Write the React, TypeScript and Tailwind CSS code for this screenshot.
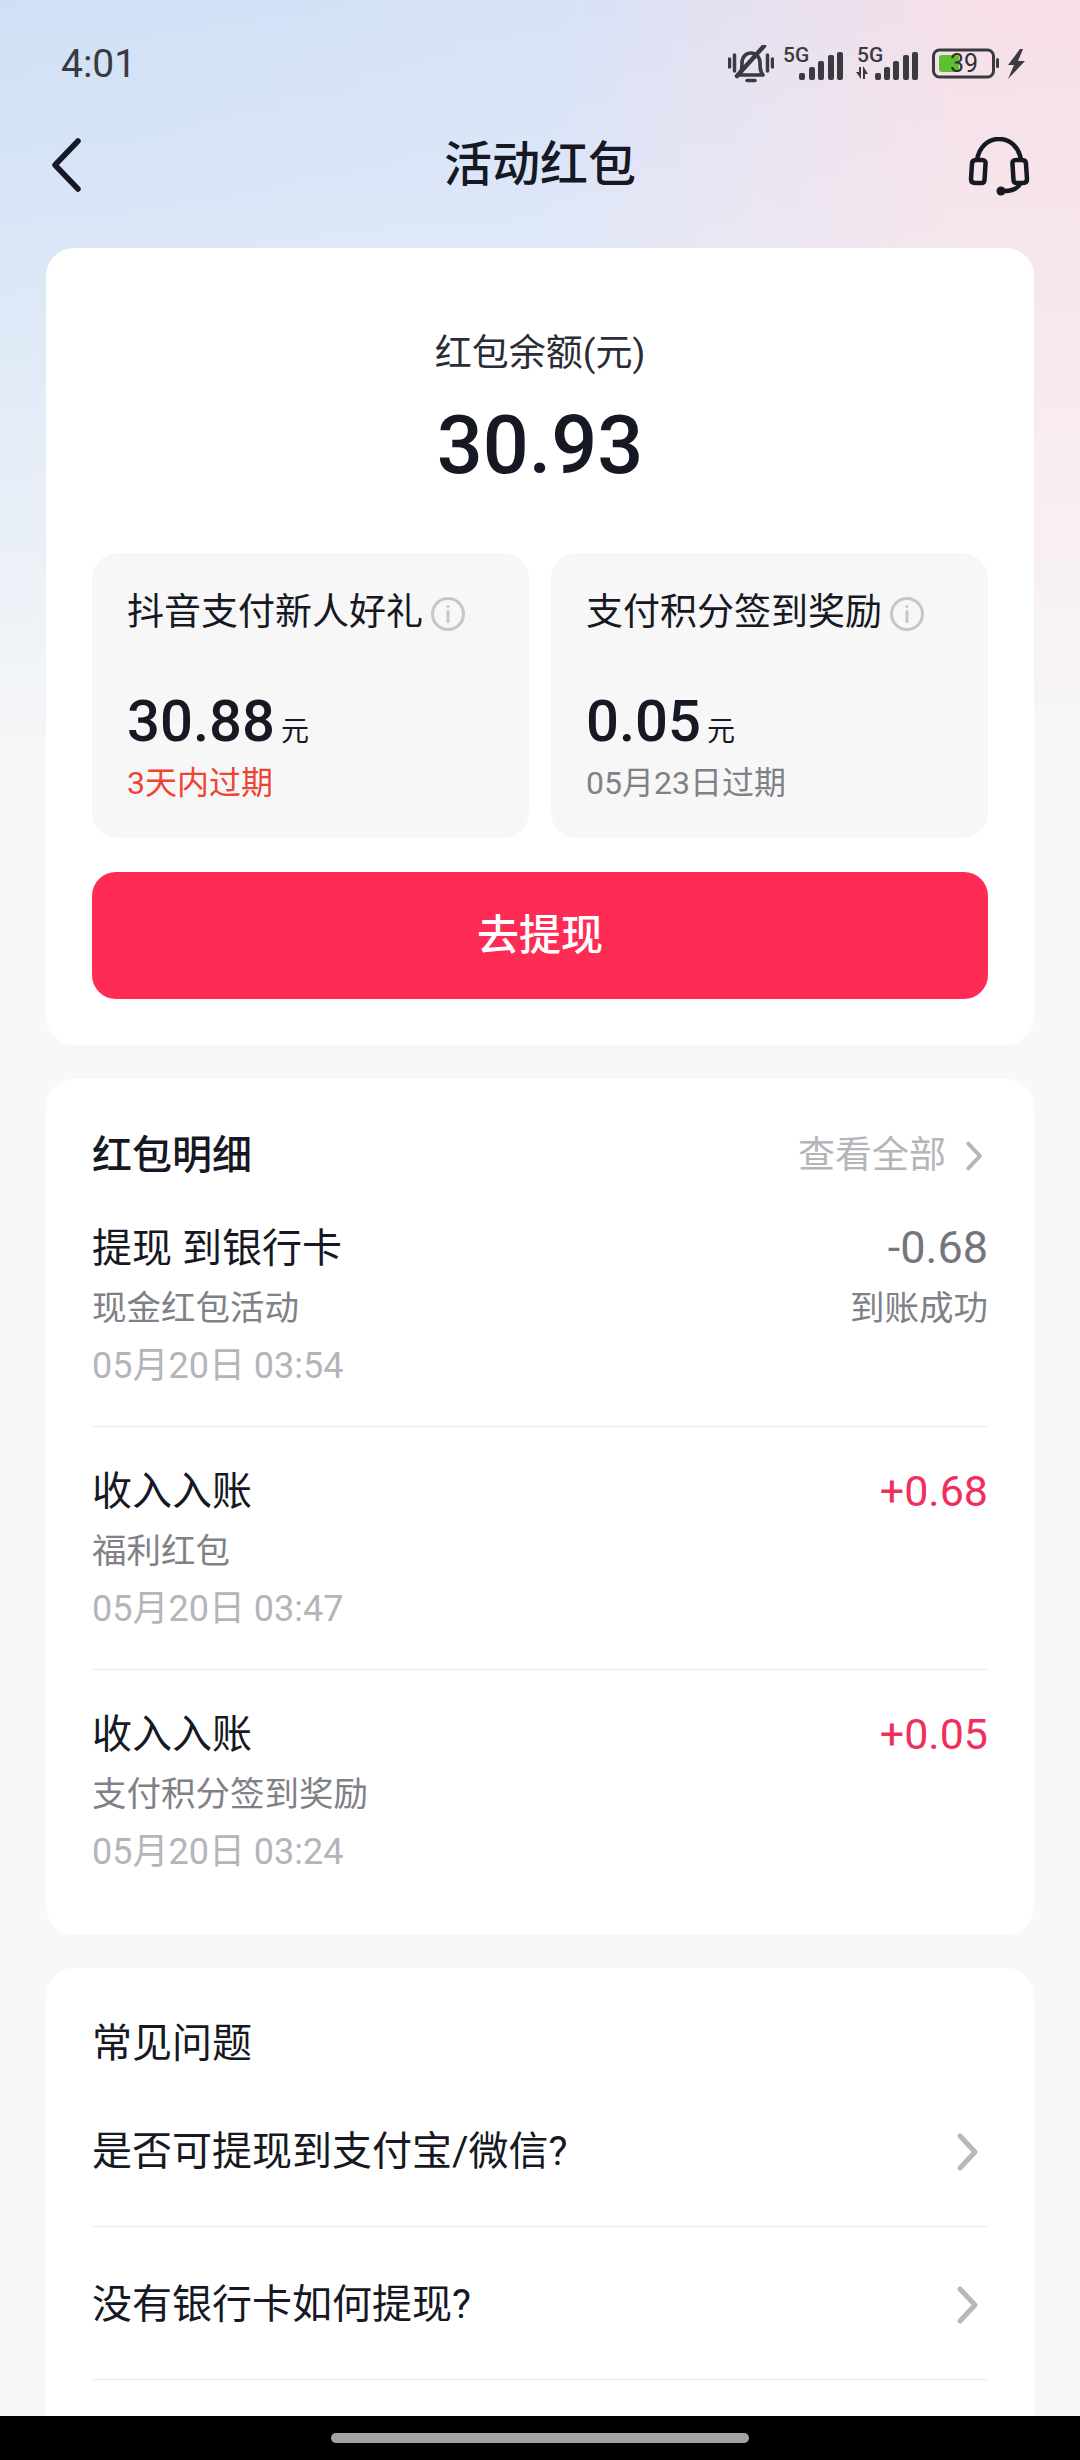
const cjk = "font-['Roboto','Noto_Sans_CJK_SC',sans-serif]"

function Bell() {
    return (
        <svg width="46" height="38" viewBox="0 0 46 38" fill="none" stroke="#3a3a40">
            <path d="M1.5 14v8M6.500 10v16M39.500 10v16M44.500 14v8" strokeWidth="3.500" strokeLinecap="round" />
            <path d="M11 30c3-3 3-7 3-12 0-6 4-10 9-10s9 4 9 10c0 5 0 9 3 12z" strokeWidth="3.600" strokeLinejoin="round" />
            <path d="M19 35.500h8" strokeWidth="3.500" strokeLinecap="round" />
            <path d="M9 31 36 1" strokeWidth="4.500" strokeLinecap="round" />
        </svg>
    )
}

function Signal({ arrows }: { arrows?: boolean }) {
    return (
        <div className="relative h-[32px] w-[62px]">
            <span className={arrows ? 'absolute left-[1px] top-[-3px] text-[21px] font-medium leading-[21px] text-[#3a3a40]' : 'absolute left-[-13px] top-[-3px] text-[21px] font-medium leading-[21px] text-[#3a3a40]'}>
                5G
            </span>
            <svg width="62" height="32" viewBox="0 0 62 32" fill="#3a3a40">
                {arrows && <path d="M0 24h3v-5h2v12zM7 18l5 8H9v5H7z" />}
                <rect x={arrows ? 19 : 3} y="25" width="6" height="7" rx="2" />
                <rect x={arrows ? 28 : 13} y="19" width="6" height="13" rx="2" />
                <rect x={arrows ? 37 : 22} y="13" width="6" height="19" rx="2" />
                <rect x={arrows ? 47 : 32} y="7" width="6" height="25" rx="2" />
                <rect x={arrows ? 56 : 41} y="4" width="6" height="28" rx="2" />
            </svg>
        </div>
    )
}

function Battery() {
    return (
        <div className="relative h-[32px] w-[94px]">
            <svg width="94" height="32" viewBox="0 0 94 32" fill="none">
                <rect x="1.500" y="2" width="60" height="27" rx="6" stroke="#3a3a40" strokeWidth="3" />
                <rect x="7" y="7" width="20" height="17" rx="3" fill="#5cc12e" />
                <rect x="64" y="10" width="3" height="10" rx="1.500" fill="#3a3a40" />
                <path d="M88 1 76 17h6l-6 14 17-18h-7l5-12z" fill="#3a3a40" />
            </svg>
            <span className="absolute left-[18px] top-0 text-[25px] leading-[31px] text-[#2e3230]">39</span>
        </div>
    )
}

function Chevron({ className }: { className?: string }) {
    return (
        <svg className={className} viewBox="0 0 22 38" fill="none">
            <path d="M3 3l15 16L3 35" stroke="currentColor" strokeWidth="5" strokeLinecap="round" strokeLinejoin="round" />
        </svg>
    )
}

function Info() {
    return (
        <svg width="34" height="34" viewBox="0 0 34 34" fill="none" className="ml-[8px] mt-px">
            <circle cx="17" cy="17" r="15.500" stroke="#c6c6c8" strokeWidth="3" />
            <rect x="15.500" y="8" width="3" height="3" rx="1.500" fill="#c6c6c8" />
            <rect x="15.500" y="13" width="3" height="13" rx="1.500" fill="#c6c6c8" />
        </svg>
    )
}

function BalanceBox({ title, amount, note, red }: { title: string; amount: string; note: string; red?: boolean }) {
    return (
        <div className="h-[285px] flex-1 rounded-[26px] bg-[#f7f7f8] pl-[35px] pt-[38px]">
            <div className="flex h-[44px] items-center text-[37px] text-[#161823]">
                {title}
                <Info />
            </div>
            <div className="mt-[43px] flex h-[70px] items-baseline text-[#161823]">
                <span className="text-[58px] font-medium">{amount}</span>
                <span className="ml-[6px] text-[28px]">元</span>
            </div>
            <div className={red ? 'mt-[13px] text-[32px] leading-[44px] text-[#ee4433]' : 'mt-[13px] text-[32px] leading-[44px] text-[#808187]'}>
                {note}
            </div>
        </div>
    )
}

function DetailRow({ title, from, time, amount, status, plus, last }: {
    title: string
    from: string
    time: string
    amount: string
    status?: string
    plus?: boolean
    last?: boolean
}) {
    return (
        <div className={last ? 'flex justify-between pb-[39px] pt-[40px]' : 'flex justify-between border-b border-[#ececee] pb-[38px] pt-[40px]'}>
            <div>
                <div className="text-[40px] leading-[50px] text-[#161823]">{title}</div>
                <div className="mt-[12px] text-[34.500px] leading-[44px] text-[#808187]">{from}</div>
                <div className="mt-[14px] text-[36px] leading-[44px] text-[#b4b5b9]">{time}</div>
            </div>
            <div className="text-right">
                <div className={plus ? 'mt-[-1px] text-[43px] leading-[50px] text-[#f0305a]' : 'mt-[-1px] text-[45px] leading-[50px] text-[#75767c]'}>{amount}</div>
                {status && <div className="mt-[13px] text-[34.500px] leading-[44px] text-[#808187]">{status}</div>}
            </div>
        </div>
    )
}

function FaqRow({ text }: { text: string }) {
    return (
        <div className="flex h-[153px] items-center justify-between border-b border-[#ececee] pr-[9px] pt-[3px]">
            <span className="text-[40px] text-[#161823]">{text}</span>
            <Chevron className="h-[38px] w-[22px] text-[#b8b8ba]" />
        </div>
    )
}

export default function App() {
    return (
        <div className={`flex h-[2460px] w-[1080px] flex-col overflow-hidden bg-[#f8f8f8] bg-[linear-gradient(180deg,rgba(248,248,248,0)_0px,rgba(248,248,248,0.15)_150px,#f8f8f8_800px),linear-gradient(90deg,#cfe0f6_0%,#d6e2f8_50%,#f6dfe8_90%,#f7dfe8_100%)] ${cjk}`}>
            <div className="min-h-0 flex-1 overflow-hidden">
                <div className="flex h-[128px] items-center justify-between pl-[61px] pr-[54px]">
                    <span className="text-[39px] text-[#3a3a40]">4:01</span>
                    <div className="flex items-center">
                        <Bell />
                        <div className="ml-[22px] flex items-center gap-[12px]">
                            <div className="w-[48px]">
                                <Signal />
                            </div>
                            <Signal arrows />
                        </div>
                        <div className="ml-[14px]">
                            <Battery />
                        </div>
                    </div>
                </div>
                <div className="relative flex h-[74px] items-center justify-center">
                    <svg width="30" height="54" viewBox="0 0 30 54" fill="none" className="absolute left-[51px] top-[10px]">
                        <path d="M27 3 4 27l23 24" stroke="#161823" strokeWidth="5.500" strokeLinecap="round" strokeLinejoin="round" />
                    </svg>
                    <span className="text-[48px] font-[450] text-[#161823]">活动红包</span>
                    <svg width="64" height="62" viewBox="0 0 64 62" fill="none" stroke="#161823" strokeWidth="4.500" className="absolute left-[968px] top-[9px]">
                        <path d="M9 23C11 10 20 2 31 2s20 8 22 21" />
                        <path d="M8 23h6q4 0 3.500 4l-1 16q0 3-3.500 3H7q-4 0-4-4l1-15q0-4 4-4z" />
                        <path d="M54 23h-6q-4 0-3.500 4l1 16q0 3 3.500 3h6q4 0 4-4l-1-15q0-4-4-4z" />
                        <path d="M52 47c-2 4-8 7-17 7" strokeLinecap="round" />
                        <circle cx="33" cy="54" r="4.500" fill="#161823" stroke="none" />
                    </svg>
                </div>

                <div className="mx-[46px] mt-[46px] rounded-[28px] bg-white px-[46px] pb-[46px] pt-[84px]">
                    <div className="text-center text-[37px] leading-[44px] text-[#2a2c36]">红包余额(元)</div>
                    <div className="mt-[20px] text-center text-[81px] font-medium leading-[100px] text-[#161823]">30.93</div>
                    <div className="mt-[57px] flex gap-[22px]">
                        <BalanceBox title="抖音支付新人好礼" amount="30.88" note="3天内过期" red />
                        <BalanceBox title="支付积分签到奖励" amount="0.05" note="05月23日过期" />
                    </div>
                    <button className="mt-[34px] block h-[127px] w-full rounded-[24px] bg-[#fe2c55] text-[42px] font-[450] text-white">
                        去提现
                    </button>
                </div>

                <div className="mx-[46px] mt-[34px] rounded-[28px] bg-white px-[46px] pb-[22px] pt-[52px]">
                    <div className="mb-[3px] flex h-[50px] items-center justify-between">
                        <span className="text-[40px] font-[450] text-[#161823]">红包明细</span>
                        <div className="flex items-center pr-[5px] text-[#b4b5b9]">
                            <span className="text-[37px]">查看全部</span>
                            <Chevron className="ml-[20px] h-[30px] w-[17px]" />
                        </div>
                    </div>
                    <DetailRow title="提现 到银行卡" from="现金红包活动" time="05月20日 03:54" amount="-0.68" status="到账成功" />
                    <DetailRow title="收入入账" from="福利红包" time="05月20日 03:47" amount="+0.68" plus />
                    <DetailRow title="收入入账" from="支付积分签到奖励" time="05月20日 03:24" amount="+0.05" plus last />
                </div>

                <div className="mx-[46px] mt-[33px] rounded-[28px] bg-white px-[46px] pt-[51px]">
                    <div className="mb-[5px] text-[40px] leading-[50px] text-[#161823]">常见问题</div>
                    <FaqRow text="是否可提现到支付宝/微信?" />
                    <FaqRow text="没有银行卡如何提现?" />
                    <div className="h-[153px]" />
                </div>
            </div>
            <div className="flex h-[44px] shrink-0 items-center justify-center bg-black">
                <div className="h-[10px] w-[418px] rounded-full bg-[#a4a4a4]" />
            </div>
        </div>
    )
}
